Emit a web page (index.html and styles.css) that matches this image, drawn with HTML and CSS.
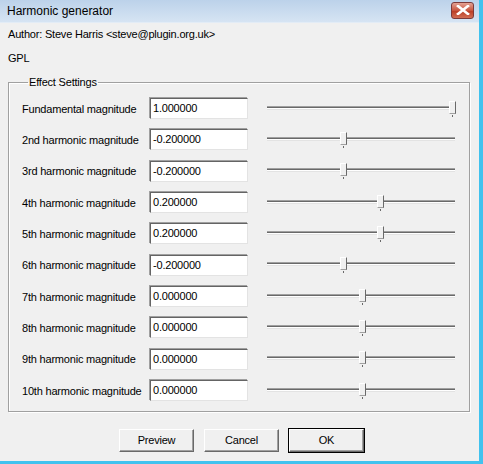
FILE: index.html
```html
<!DOCTYPE html>
<html>
<head>
<meta charset="utf-8">
<link rel="stylesheet" href="styles.css">
</head>
<body>
<div class="window">
  <div class="titlebar">
    <span class="title">Harmonic generator</span>
    <span class="close"><svg width="14" height="10" viewBox="0 0 14 10"><path d="M2 1 L12 9 M12 1 L2 9" stroke="#fff" stroke-width="2.6" stroke-linecap="square"/></svg></span>
  </div>
  <div class="client">
    <div class="info author">Author: Steve Harris &lt;steve@plugin.org.uk&gt;</div>
    <div class="info gpl">GPL</div>
    <fieldset class="group">
      <legend>Effect Settings</legend>
      <div class="rows">
        <div class="row"><span class="lbl">Fundamental magnitude</span><span class="edit">1.000000</span><span class="slider"><span class="track"></span><span class="thumb" style="left:182px"></span></span></div>
        <div class="row"><span class="lbl">2nd harmonic magnitude</span><span class="edit">-0.200000</span><span class="slider"><span class="track"></span><span class="thumb" style="left:73px"></span></span></div>
        <div class="row"><span class="lbl">3rd harmonic magnitude</span><span class="edit">-0.200000</span><span class="slider"><span class="track"></span><span class="thumb" style="left:73px"></span></span></div>
        <div class="row"><span class="lbl">4th harmonic magnitude</span><span class="edit">0.200000</span><span class="slider"><span class="track"></span><span class="thumb" style="left:110px"></span></span></div>
        <div class="row"><span class="lbl">5th harmonic magnitude</span><span class="edit">0.200000</span><span class="slider"><span class="track"></span><span class="thumb" style="left:110px"></span></span></div>
        <div class="row"><span class="lbl">6th harmonic magnitude</span><span class="edit">-0.200000</span><span class="slider"><span class="track"></span><span class="thumb" style="left:73px"></span></span></div>
        <div class="row"><span class="lbl">7th harmonic magnitude</span><span class="edit">0.000000</span><span class="slider"><span class="track"></span><span class="thumb" style="left:92px"></span></span></div>
        <div class="row"><span class="lbl">8th harmonic magnitude</span><span class="edit">0.000000</span><span class="slider"><span class="track"></span><span class="thumb" style="left:92px"></span></span></div>
        <div class="row"><span class="lbl">9th harmonic magnitude</span><span class="edit">0.000000</span><span class="slider"><span class="track"></span><span class="thumb" style="left:92px"></span></span></div>
        <div class="row"><span class="lbl">10th harmonic magnitude</span><span class="edit">0.000000</span><span class="slider"><span class="track"></span><span class="thumb" style="left:92px"></span></span></div>
      </div>
    </fieldset>
    <div class="buttons">
      <span class="btn">Preview</span>
      <span class="btn">Cancel</span>
      <span class="btn default">OK</span>
    </div>
  </div>
</div>
</body>
</html>
```

FILE: styles.css
```css
html, body {
  margin: 0;
  padding: 0;
  background: #f0f0f0;
}
.window {
  width: 479px;
  height: 461px;
  border-right: 4px solid #41c2ee;
  border-bottom: 3px solid #41c2ee;
  background: #f0f0f0;
  font-family: "Liberation Sans", Arial, sans-serif;
  font-size: 11px;
  letter-spacing: -0.2px;
  color: #000;
  display: flex;
  flex-direction: column;
  overflow: hidden;
}
.titlebar {
  height: 22px;
  flex: none;
  background: linear-gradient(#bcd2ea, #d6e4f3);
  display: flex;
  align-items: center;
  justify-content: space-between;
  padding: 0 5px 0 7px;
  border-bottom: 1px solid #e3ecf6;
}
.title {
  font-size: 12px;
  letter-spacing: 0;
  color: #000;
}
.close {
  width: 21px;
  height: 15px;
  border: 1px solid #7c3a3a;
  border-radius: 3px;
  background: linear-gradient(#e4a294, #c8553f 50%, #b93a22 51%, #d26d54);
  display: flex;
  align-items: center;
  justify-content: center;
  margin-top: -2px;
}
.client {
  flex: 1;
  display: flex;
  flex-direction: column;
  padding: 0 9px 0 8px;
}
.info {
  height: 24px;
  line-height: 24px;
  white-space: nowrap;
}
.author { margin-top: -1px; }
.group {
  margin: 6px 0 0 0;
  padding: 5px 0 0 13px;
  border: 1px solid #a0a0a0;
  box-shadow: inset 1px 1px 0 #fff, 1px 1px 0 #fff;
  height: 336px;
  box-sizing: border-box;
}
.group legend {
  padding: 0 1px;
  margin-left: 6px;
  line-height: 12px;
}
.rows {
  display: grid;
  grid-auto-rows: 31.33px;
}
.row {
  display: flex;
  align-items: center;
  white-space: nowrap;
}
.lbl {
  width: 128px;
  flex: none;
}
.edit {
  width: 94px;
  height: 19px;
  line-height: 19px;
  padding-left: 2px;
  background: #fff;
  border-top: 1px solid #646464;
  border-left: 1px solid #646464;
  border-right: 1px solid #e3e3e3;
  border-bottom: 1px solid #e3e3e3;
  box-shadow: -1px -1px 0 #a0a0a0;
  flex: none;
}
.slider {
  position: relative;
  width: 188px;
  height: 22px;
  margin-left: 19px;
  flex: none;
}
.track {
  position: absolute;
  left: 0;
  right: 0;
  top: 8px;
  height: 1px;
  border-top: 1px solid #a0a0a0;
  border-bottom: 1px solid #fff;
  background: #696969;
  box-shadow: 0 1px 0 #e3e3e3;
}
.thumb {
  position: absolute;
  top: 3px;
  width: 5px;
  height: 11px;
  background: #f0f0f0;
  border-left: 1px solid #fff;
  border-top: 1px solid #fff;
  border-right: 1px solid #696969;
  border-bottom: 1px solid #a0a0a0;
}
.thumb::after {
  content: "";
  position: absolute;
  left: 2px;
  top: 13px;
  width: 1px;
  height: 2px;
  background: #696969;
}
.buttons {
  display: flex;
  gap: 10px;
  padding-left: 111px;
  margin-top: 17px;
}
.btn {
  width: 73px;
  height: 21px;
  line-height: 21px;
  text-align: center;
  background: #f0f0f0;
  border-top: 1px solid #fff;
  border-left: 1px solid #fff;
  border-right: 1px solid #696969;
  border-bottom: 1px solid #696969;
  box-shadow: inset -1px -1px 0 #a0a0a0;
  box-sizing: content-box;
}
.btn.default {
  outline: 1px solid #000;
}
```
